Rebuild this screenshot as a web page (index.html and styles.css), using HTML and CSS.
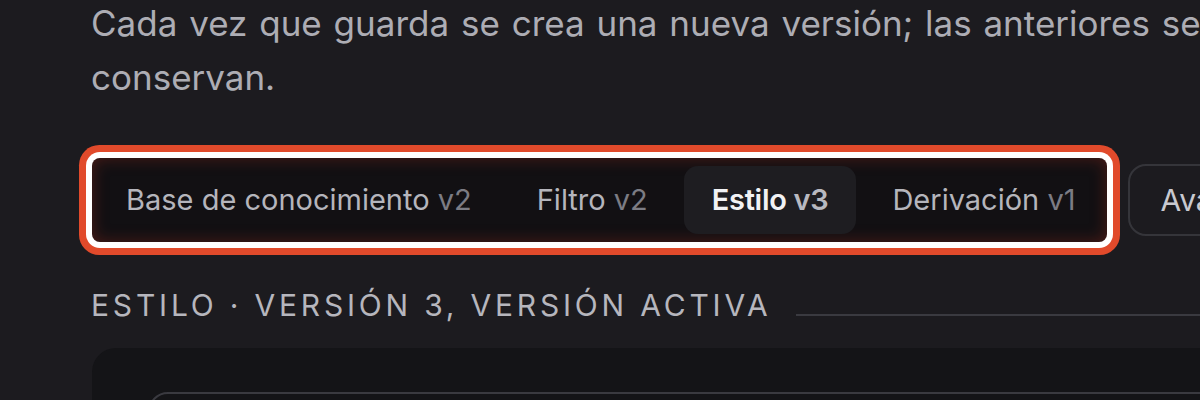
FILE: index.html
```html
<!DOCTYPE html>
<html lang="es">
<head>
<meta charset="utf-8">
<title>Versiones</title>
<link rel="stylesheet" href="styles.css">
</head>
<body>
<main class="page">
  <p class="intro">Cada vez que guarda se crea una nueva versión; las anteriores se conservan.</p>
  <div class="tabs-row">
    <nav class="tabbar">
      <span class="tab">Base de conocimiento <span class="ver">v2</span></span>
      <span class="tab">Filtro <span class="ver">v2</span></span>
      <span class="tab active">Estilo <span class="ver">v3</span></span>
      <span class="tab">Derivación <span class="ver">v1</span></span>
    </nav>
    <button class="btn-outline">Avanzado</button>
  </div>
  <div class="section-head">
    <h2 class="section-title">Estilo · Versión 3, versión activa</h2>
    <div class="section-rule"></div>
  </div>
  <section class="card">
    <div class="card-inner"></div>
  </section>
</main>
</body>
</html>
```

FILE: styles.css
```css
html, body {
  margin: 0;
  padding: 0;
  background: #1c1b1f;
  overflow: hidden;
}

body {
  font-family: Inter, "Noto Sans", "Liberation Sans", sans-serif;
  color: #b3b3ba;
}

.page {
  width: 1300px;
  padding-left: 91px;
  box-sizing: border-box;
}

.intro {
  margin: -4px 0 0;
  width: 1140px;
  font-size: 35px;
  line-height: 54px;
  word-spacing: 2px;
  color: #adadb4;
}

.tabs-row {
  margin-top: 54px;
  display: flex;
  align-items: center;
  gap: 21px;
}

.tabbar {
  display: flex;
  gap: 7px;
  padding: 8px 3px 8px 5px;
  margin-left: 1px;
  background: #121013;
  border-radius: 8px;
  box-shadow:
    inset 0 0 16px rgba(190, 50, 30, 0.35),
    0 0 0 6px #ffffff,
    0 0 0 13px #e14a2b;
}

.tab {
  display: flex;
  align-items: center;
  height: 68px;
  padding: 0 29px;
  font-size: 29px;
  line-height: 36px;
  color: #b5b5bc;
  border-radius: 14px;
  white-space: pre;
}

.tab .ver {
  color: #7c7c84;
}

.tab.active {
  padding: 0 28px;
  background: #1e1d21;
  color: #f2f2f4;
  font-weight: 600;
  letter-spacing: -0.3px;
}

.tab.active .ver {
  color: #b9b9c0;
}

.btn-outline {
  height: 72px;
  padding: 0 30px;
  font: inherit;
  font-size: 30px;
  color: #c9c9cf;
  background: transparent;
  border: 2px solid #35353a;
  border-radius: 18px;
  white-space: nowrap;
}

.section-head {
  margin-top: 45px;
  display: flex;
  align-items: baseline;
  gap: 25px;
}

.section-title {
  margin: 0;
  font-size: 30px;
  line-height: 36px;
  font-weight: 400;
  letter-spacing: 3.8px;
  text-transform: uppercase;
  color: #b6b6bd;
  white-space: nowrap;
}

.section-rule {
  flex: 1;
  height: 2px;
  background: #3a3a40;
}

.card {
  margin: 25px 0 0 1px;
  height: 300px;
  padding: 44px 0 0 56px;
  background: #141417;
  border-radius: 24px;
}

.card-inner {
  height: 200px;
  border: 2px solid #3a3a40;
  border-radius: 20px;
}
```
